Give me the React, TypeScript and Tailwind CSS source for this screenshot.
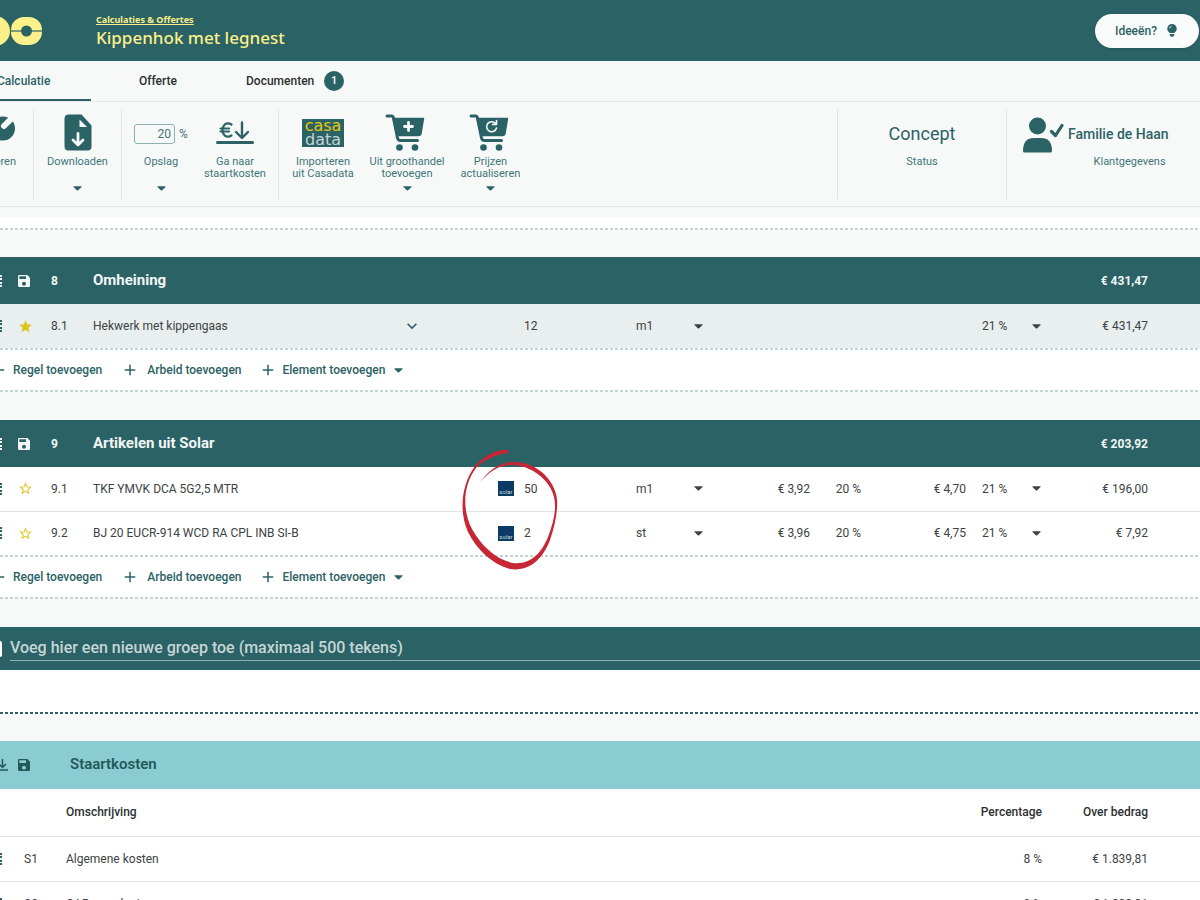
import { ReactNode } from "react";
import { MdAdd, MdExpandMore, MdSave, MdStar, MdStarBorder } from "react-icons/md";

interface Line {
  id: string;
  name: string;
  amount: string;
  unit: string;
  cost?: string;
  markup?: string;
  price?: string;
  vat: string;
  total: string;
  favorite?: boolean;
  solar?: boolean;
}

interface Group {
  id: string;
  name: string;
  total: string;
  lines: Line[];
}

const groups: Group[] = [
  {
    id: "8",
    name: "Omheining",
    total: "€ 431,47",
    lines: [
      { id: "8.1", name: "Hekwerk met kippengaas", amount: "12", unit: "m1", vat: "21 %", total: "€ 431,47", favorite: true },
    ],
  },
  {
    id: "9",
    name: "Artikelen uit Solar",
    total: "€ 203,92",
    lines: [
      { id: "9.1", name: "TKF YMVK DCA 5G2,5 MTR", amount: "50", unit: "m1", cost: "€ 3,92", markup: "20 %", price: "€ 4,70", vat: "21 %", total: "€ 196,00", solar: true },
      { id: "9.2", name: "BJ 20 EUCR-914 WCD RA CPL INB SI-B", amount: "2", unit: "st", cost: "€ 3,96", markup: "20 %", price: "€ 4,75", vat: "21 %", total: "€ 7,92", solar: true },
    ],
  },
];

const tailCosts = [
  { id: "S1", name: "Algemene kosten", percentage: "8 %", base: "€ 1.839,81" },
  { id: "S2", name: "CAR verzekering", percentage: "0 %", base: "€ 1.839,81" },
];

const Caret = () => (
  <svg viewBox="0 0 9 5" className="h-[5px] w-[9px] shrink-0 fill-current" aria-hidden="true">
    <path d="M0.8 0.3h7.4q0.800 0 0.3 0.700L5.200 4.300q-0.700 0.600-1.400 0L0.500 1q-0.500-0.700 0.300-0.700z" />
  </svg>
);

const DragHandle = () => (
  <svg viewBox="0 0 8 14" className="-ml-[6px] h-[14px] w-2 fill-current" aria-hidden="true">
    <path d="M1 1h2v2H1zM1 4h2v2H1zM1 8h2v2H1zM1 11h2v2H1zM6 1h2v2H6zM6 4h2v2H6zM6 8h2v2H6zM6 11h2v2H6z" />
  </svg>
);

const DashedLine = () => (
  <div className="h-[2px] bg-[repeating-linear-gradient(90deg,#c3d4d5_0_3px,transparent_3px_5px)]" />
);

const SolarLogo = () => (
  <svg viewBox="0 0 16 15" className="h-[15px] w-4 shrink-0" role="img" aria-label="Solar">
    <rect width="16" height="15" fill="#0b3a66" />
    <text x="8" y="13" textAnchor="middle" fontSize="6" fill="#c5ddd2" fontFamily="Roboto, sans-serif">solar</text>
  </svg>
);

const CasadataLogo = () => (
  <svg viewBox="0 0 42 28" className="h-7 w-[42px]" role="img" aria-label="Casadata">
    <rect width="42" height="28" fill="#2b6265" />
    <text x="21" y="12" textAnchor="middle" fontSize="16" fill="#e5c80e" fontFamily="'DejaVu Sans', sans-serif">casa</text>
    <text x="21" y="26" textAnchor="middle" fontSize="16" fill="#c5d3d3" fontFamily="'DejaVu Sans', sans-serif">data</text>
  </svg>
);

const DownloadFile = () => (
  <svg viewBox="0 0 28 37" className="h-[37px] w-7" aria-hidden="true">
    <path fill="#2b6265" d="M4 0.5h13.500L27.500 11.500V32.500a4 4 0 0 1-4 4H4.500a4 4 0 0 1-4-4V4.500a4 4 0 0 1 3.500-4z" />
    <path fill="#f7f9f8" d="M15.500 5.500v7.500h7.500z" />
    <path d="M14 19.500v11M9 26l5 5 5-5" fill="none" stroke="#f7f9f8" strokeWidth="2.800" strokeLinecap="round" strokeLinejoin="round" />
  </svg>
);

const Wrench = () => (
  <svg viewBox="0 0 16 34" className="h-[34px] w-4" aria-hidden="true">
    <circle cx="3" cy="12.500" r="12" fill="#2b6265" />
    <path d="M14 0L4 10" stroke="#f7f9f8" strokeWidth="6" strokeLinecap="round" />
  </svg>
);

const EuroDown = () => (
  <svg viewBox="0 0 38 24" className="h-6 w-[38px]" fill="none" stroke="#2b6265" strokeLinecap="round" strokeLinejoin="round" aria-hidden="true">
    <path d="M15.500 3.500C10 0 6.500 5 6.500 9s3.500 9 9 5.500M4.500 7.500h8.500M4.500 10.500h8.500" strokeWidth="2.200" />
    <path d="M26 1.500v15M20 11l6 6 6-6" strokeWidth="2.400" />
    <path d="M1.500 21.500h35" strokeWidth="3" />
  </svg>
);

const Cart = ({ children }: { children: ReactNode }) => (
  <svg viewBox="0 0 40 37" className="mr-1 h-[37px] w-10" fill="none" stroke="#2b6265" strokeLinecap="round" strokeLinejoin="round" aria-hidden="true">
    <path d="M2 2h4.500q1.500 0 2 2l4 20q0.500 2.500 3 2.500h17" strokeWidth="3" />
    <path d="M8 4.500h30.500l-2.500 15q-0.300 2-2.500 2H12z" fill="#2b6265" strokeWidth="1.500" />
    <circle cx="14.500" cy="33.500" r="3.300" fill="#2b6265" stroke="none" />
    <circle cx="30" cy="33.500" r="3.300" fill="#2b6265" stroke="none" />
    <g stroke="#f7f9f8">{children}</g>
  </svg>
);

const Customer = () => (
  <svg viewBox="0 0 41 36" className="h-9 w-[41px] shrink-0" aria-hidden="true">
    <circle cx="14.500" cy="9" r="8.500" fill="#2b6265" />
    <path fill="#2b6265" d="M0 34q0-13 11-13h7q11 0 11 13 0 1.500-1.500 1.500h-26Q0 35.500 0 34z" />
    <path d="M28.500 14.500l4 4L39 8.500" fill="none" stroke="#2b6265" strokeWidth="3.200" strokeLinecap="round" strokeLinejoin="round" />
  </svg>
);

const Bulb = () => (
  <svg viewBox="0 0 10 13" className="h-[13px] w-[10px]" aria-hidden="true">
    <path fill="#2b6265" d="M5 0a4.700 4.700 0 0 1 2.600 8.600V9H2.400v-.4A4.700 4.700 0 0 1 5 0zM2.700 10h4.600v1L6 12.700H4L2.700 11z" />
    <path d="M2.500 4.500Q2.700 2.600 4.500 2.300" fill="none" stroke="#fff" strokeWidth=".8" />
  </svg>
);

const Select = ({ label, value, options }: { label: string; value: string; options: string[] }) => (
  <div className="flex items-center pr-2">
    <select aria-label={label} defaultValue={value} className="min-w-0 flex-1 appearance-none bg-transparent">
      {options.map((option) => (
        <option key={option}>{option}</option>
      ))}
    </select>
    <Caret />
  </div>
);

const Tool = ({ icon, label, menu, className }: { icon: ReactNode; label: ReactNode; menu?: boolean; className?: string }) => (
  <button className={`flex h-full flex-col items-center pt-[3px] text-center text-[11px] leading-3 text-[#3f7578] ${className}`}>
    <span className="flex h-[41px] items-center">{icon}</span>
    <span className="mt-[3px] h-6">{label}</span>
    {menu && (
      <span className="mt-[6px] text-[#2b6265]">
        <Caret />
      </span>
    )}
  </button>
);

const GroupTable = ({ group }: { group: Group }) => (
  <section className="mb-7">
    <table className="w-full table-fixed text-left text-xs text-[#3c4344]">
      <colgroup>
        <col className="w-[14px]" />
        <col className="w-[37px]" />
        <col className="w-[42px]" />
        <col />
        <col className="w-[152px]" />
        <col className="w-[75px]" />
        <col className="w-[99px]" />
        <col className="w-[51px]" />
        <col className="w-[105px]" />
        <col className="w-[83px]" />
        <col className="w-[99px]" />
        <col className="w-[52px]" />
      </colgroup>
      <thead className="bg-[#2b6265] text-[#f1f6f6]">
        <tr className="h-[47px]">
          <th>
            <DragHandle />
          </th>
          <th className="pl-[2px]">
            <button aria-label="Groep opslaan" className="block">
              <MdSave size={16} />
            </button>
          </th>
          <th className="font-bold">{group.id}</th>
          <th colSpan={7} className="text-[15px] font-bold">{group.name}</th>
          <th className="text-right font-bold whitespace-nowrap">{group.total}</th>
          <th />
        </tr>
      </thead>
      <tbody>
        {group.lines.map((line) => (
          <tr
            key={line.id}
            className={`h-[44px] border-b border-[#dfe5e5] last:border-b-0 ${line.favorite ? "bg-[#e9eeee]" : "bg-white"}`}
          >
            <td className="text-[#2b6265]">
              <DragHandle />
            </td>
            <td className="pl-1">
              <button aria-label="Favoriet" className="block text-[#dcc414]">
                {line.favorite ? <MdStar size={15} /> : <MdStarBorder size={15} />}
              </button>
            </td>
            <td>{line.id}</td>
            <td>
              <div className="flex items-center justify-between pr-[62px]">
                {line.name}
                {!line.solar && (
                  <button aria-label="Uitklappen" className="text-[#2b6265]">
                    <MdExpandMore size={20} />
                  </button>
                )}
              </div>
            </td>
            <td>
              <div className="flex items-center">
                <span className="w-10 pl-[14px]">{line.solar && <SolarLogo />}</span>
                {line.amount}
              </div>
            </td>
            <td>
              <Select label={`Eenheid ${line.id}`} value={line.unit} options={["m1", "st"]} />
            </td>
            <td className="text-right">{line.cost}</td>
            <td className="text-right">{line.markup}</td>
            <td className="text-right">{line.price}</td>
            <td className="pl-4">
              <Select label={`Btw ${line.id}`} value={line.vat} options={["21 %", "9 %", "0 %"]} />
            </td>
            <td className="text-right whitespace-nowrap">{line.total}</td>
            <td />
          </tr>
        ))}
      </tbody>
    </table>
    <div className="bg-white">
      <DashedLine />
      <div className="-ml-[10px] flex h-10 items-center text-xs font-medium text-[#2b6265]">
        <button className="flex items-center gap-[5px]">
          <MdAdd size={18} />
          Regel toevoegen
        </button>
        <button className="ml-[19px] flex items-center gap-2">
          <MdAdd size={18} />
          Arbeid toevoegen
        </button>
        <button className="ml-[18px] flex items-center gap-[5px]">
          <MdAdd size={18} />
          Element toevoegen
          <span className="ml-1">
            <Caret />
          </span>
        </button>
      </div>
      <DashedLine />
    </div>
  </section>
);

const App = () => {
  return (
    <div className="relative h-screen min-w-[900px] overflow-hidden bg-[#f7f9f8] font-[Roboto,sans-serif]">
      <header className="flex h-[61px] items-center bg-[#2b6265] pr-px text-[#fbf08a]">
        <svg viewBox="0 0 42 28" className="h-7 w-[42px]" role="img" aria-label="Logo">
          <circle cx="-5" cy="14" r="15" fill="currentColor" />
          <rect x="11" y="0" width="31" height="28" rx="13" fill="currentColor" />
          <circle cx="26.500" cy="14" r="5.500" fill="#2b6265" />
          <path d="M11 14h31" stroke="#2b6265" strokeWidth="1.200" />
        </svg>
        <div className="ml-[54px] flex-1 pt-[3px] font-['Noto_Sans',sans-serif] font-medium">
          <a href="#calculaties" className="block text-[9px] leading-3 font-bold underline">Calculaties & Offertes</a>
          <h1 className="text-[17px] leading-6">Kippenhok met legnest</h1>
        </div>
        <button className="flex h-[34px] items-center gap-[10px] rounded-full bg-[#f9fbfa] pr-[22px] pl-5 text-xs font-medium text-[#2b6265] shadow">
          Ideeën?
          <Bulb />
        </button>
      </header>

      <nav className="flex h-[41px] border-b border-[#e6eaea] text-xs font-medium text-[#2c3031]">
        <a href="#calculatie" className="flex w-[91px] items-center border-b-2 border-[#2b6265] pt-[2px] text-[#2b6265]">
          <span className="-ml-[3px]">Calculatie</span>
        </a>
        <a href="#offerte" className="ml-12 flex items-center">Offerte</a>
        <a href="#documenten" className="ml-[69px] flex items-center gap-[10px]">
          Documenten
          <span className="flex size-5 items-center justify-center rounded-full bg-[#2b6265] text-[11px] text-white">1</span>
        </a>
      </nav>

      <div className="flex h-[105px] border-b border-[#dfe4e4] py-[7px]">
        <div className="w-[34px] border-r border-[#dfe4e4]">
          <Tool icon={<Wrench />} label="Calculeren" className="-ml-10 w-14 items-end!" />
        </div>
        <div className="w-[88px] border-r border-[#dfe4e4]">
          <Tool icon={<DownloadFile />} label="Downloaden" menu className="w-full" />
        </div>
        <div className="flex w-[157px] border-r border-[#dfe4e4]">
          <div className="flex w-[78px] flex-col items-center text-[11px] leading-3 text-[#3f7578]">
            <div className="flex h-[47px] items-center gap-1 pt-[2px]">
              <input
                id="opslag"
                defaultValue="20"
                className="h-5 w-[41px] rounded-[3px] border border-[#8fb0b1] pr-[3px] text-right text-xs"
              />
              <span className="text-xs">%</span>
            </div>
            <label htmlFor="opslag" className="h-6">Opslag</label>
            <button aria-label="Opslag menu" className="mt-[6px] text-[#2b6265]">
              <Caret />
            </button>
          </div>
          <Tool icon={<EuroDown />} label={<>Ga naar<br />staartkosten</>} className="w-[70px]" />
        </div>
        <Tool icon={<CasadataLogo />} label={<>Importeren<br />uit Casadata</>} className="w-[88px]" />
        <Tool
          icon={<Cart><path d="M23.500 8.500v8M19.500 12.500h8" strokeWidth="2.800" /></Cart>}
          label={<>Uit groothandel<br />toevoegen</>}
          menu
          className="w-20"
        />
        <Tool
          icon={<Cart><path d="M26.500 9.500A5 5 0 1 0 27.500 14M27.500 6.500v4h-4" strokeWidth="1.600" /></Cart>}
          label={<>Prijzen<br />actualiseren</>}
          menu
          className="w-[87px]"
        />
        <div className="ml-auto flex w-[170px] flex-col items-center border-x border-[#dfe4e4] text-[#3f7578]">
          <span className="mt-[13px] text-lg leading-6 text-[#2b6265]">Concept</span>
          <span className="mt-[9px] text-[11px] leading-[14px]">Status</span>
        </div>
        <button className="flex w-[193px] items-start pl-4 text-right text-[#2b6265]">
          <span className="pt-2">
            <Customer />
          </span>
          <span className="ml-1">
            <span className="mt-[15px] block text-sm leading-5 font-medium whitespace-nowrap">Familie de Haan</span>
            <span className="mt-[11px] block pr-[3px] text-[11px] leading-[14px] text-[#3f7578]">Klantgegevens</span>
          </span>
        </button>
      </div>

      <main className="relative pt-[10px]">
        <div className="mb-[27px] bg-white pt-[11px]">
          <DashedLine />
        </div>

        {groups.map((group) => (
          <GroupTable key={group.id} group={group} />
        ))}

        <div className="flex h-[43px] items-center bg-[#2b6265]">
          <span className="h-4 w-[2px] rounded-r bg-white" />
          <input
            aria-label="Nieuwe groep"
            placeholder="Voeg hier een nieuwe groep toe (maximaal 500 tekens)"
            className="ml-2 h-6 flex-1 border-b border-[#8fb0b1] text-base font-medium outline-none placeholder:text-[#c6d6d7]"
          />
        </div>
        <div className="mb-[27px] bg-white pt-[42px]">
          <div className="h-[2px] bg-[repeating-linear-gradient(90deg,#2b6265_0_3px,transparent_3px_5px)]" />
        </div>

        <table className="w-full table-fixed bg-white text-left text-xs text-[#3c4344]">
          <colgroup>
            <col className="w-[14px]" />
            <col className="w-[52px]" />
            <col />
            <col className="w-[134px]" />
            <col className="w-[106px]" />
            <col className="w-[52px]" />
          </colgroup>
          <thead>
            <tr className="h-12 bg-[#8accd1] text-[#24595c]">
              <th>
                <svg viewBox="0 0 12 12" className="-ml-1 size-3" fill="none" stroke="currentColor" strokeWidth="1.500" aria-hidden="true">
                  <path d="M6.500 0v8M3 5l3.500 3.500L10 5M0 11h12" />
                </svg>
              </th>
              <th className="pl-[2px]">
                <button aria-label="Staartkosten opslaan" className="block">
                  <MdSave size={16} />
                </button>
              </th>
              <th colSpan={4} className="pl-1 text-[15px] font-semibold">Staartkosten</th>
            </tr>
            <tr className="h-[47px] border-b border-[#dfe5e5] text-[#2c3031]">
              <th />
              <th />
              <th className="font-medium">Omschrijving</th>
              <th className="text-right font-medium">Percentage</th>
              <th className="text-right font-medium">Over bedrag</th>
              <th />
            </tr>
          </thead>
          <tbody>
            {tailCosts.map((cost) => (
              <tr key={cost.id} className="h-[45px] border-b border-[#dfe5e5]">
                <td className="text-[#2b6265]">
                  <DragHandle />
                </td>
                <td className="pl-[10px]">{cost.id}</td>
                <td>{cost.name}</td>
                <td className="text-right">{cost.percentage}</td>
                <td className="text-right">{cost.base}</td>
                <td />
              </tr>
            ))}
          </tbody>
        </table>

        {/* hand-drawn marker around the Solar amounts */}
        <svg
          viewBox="0 0 100 124"
          className="pointer-events-none absolute top-[240px] left-[460px] h-[124px] w-[100px]"
          fill="#c72634"
          aria-hidden="true"
        >
          <path d="M48.500 3.500C38 1 24 9 15 19 1 38-1 65 8 85c9 18 24 32 42 37 19 3 33-10 40-29 6-17 9-36 6-46C91 28 73 15 54 15c-14 0-24 7-34 20 10-11 20-18 33-17 19 1 37 15 41 32 3 13-1 27-6 40-7 17-18 28-35 26C37 113 21 99 12 82 2 63 3 38 16 21 25 12 35 8 48 6z" />
        </svg>
      </main>
    </div>
  );
};

export default App;
